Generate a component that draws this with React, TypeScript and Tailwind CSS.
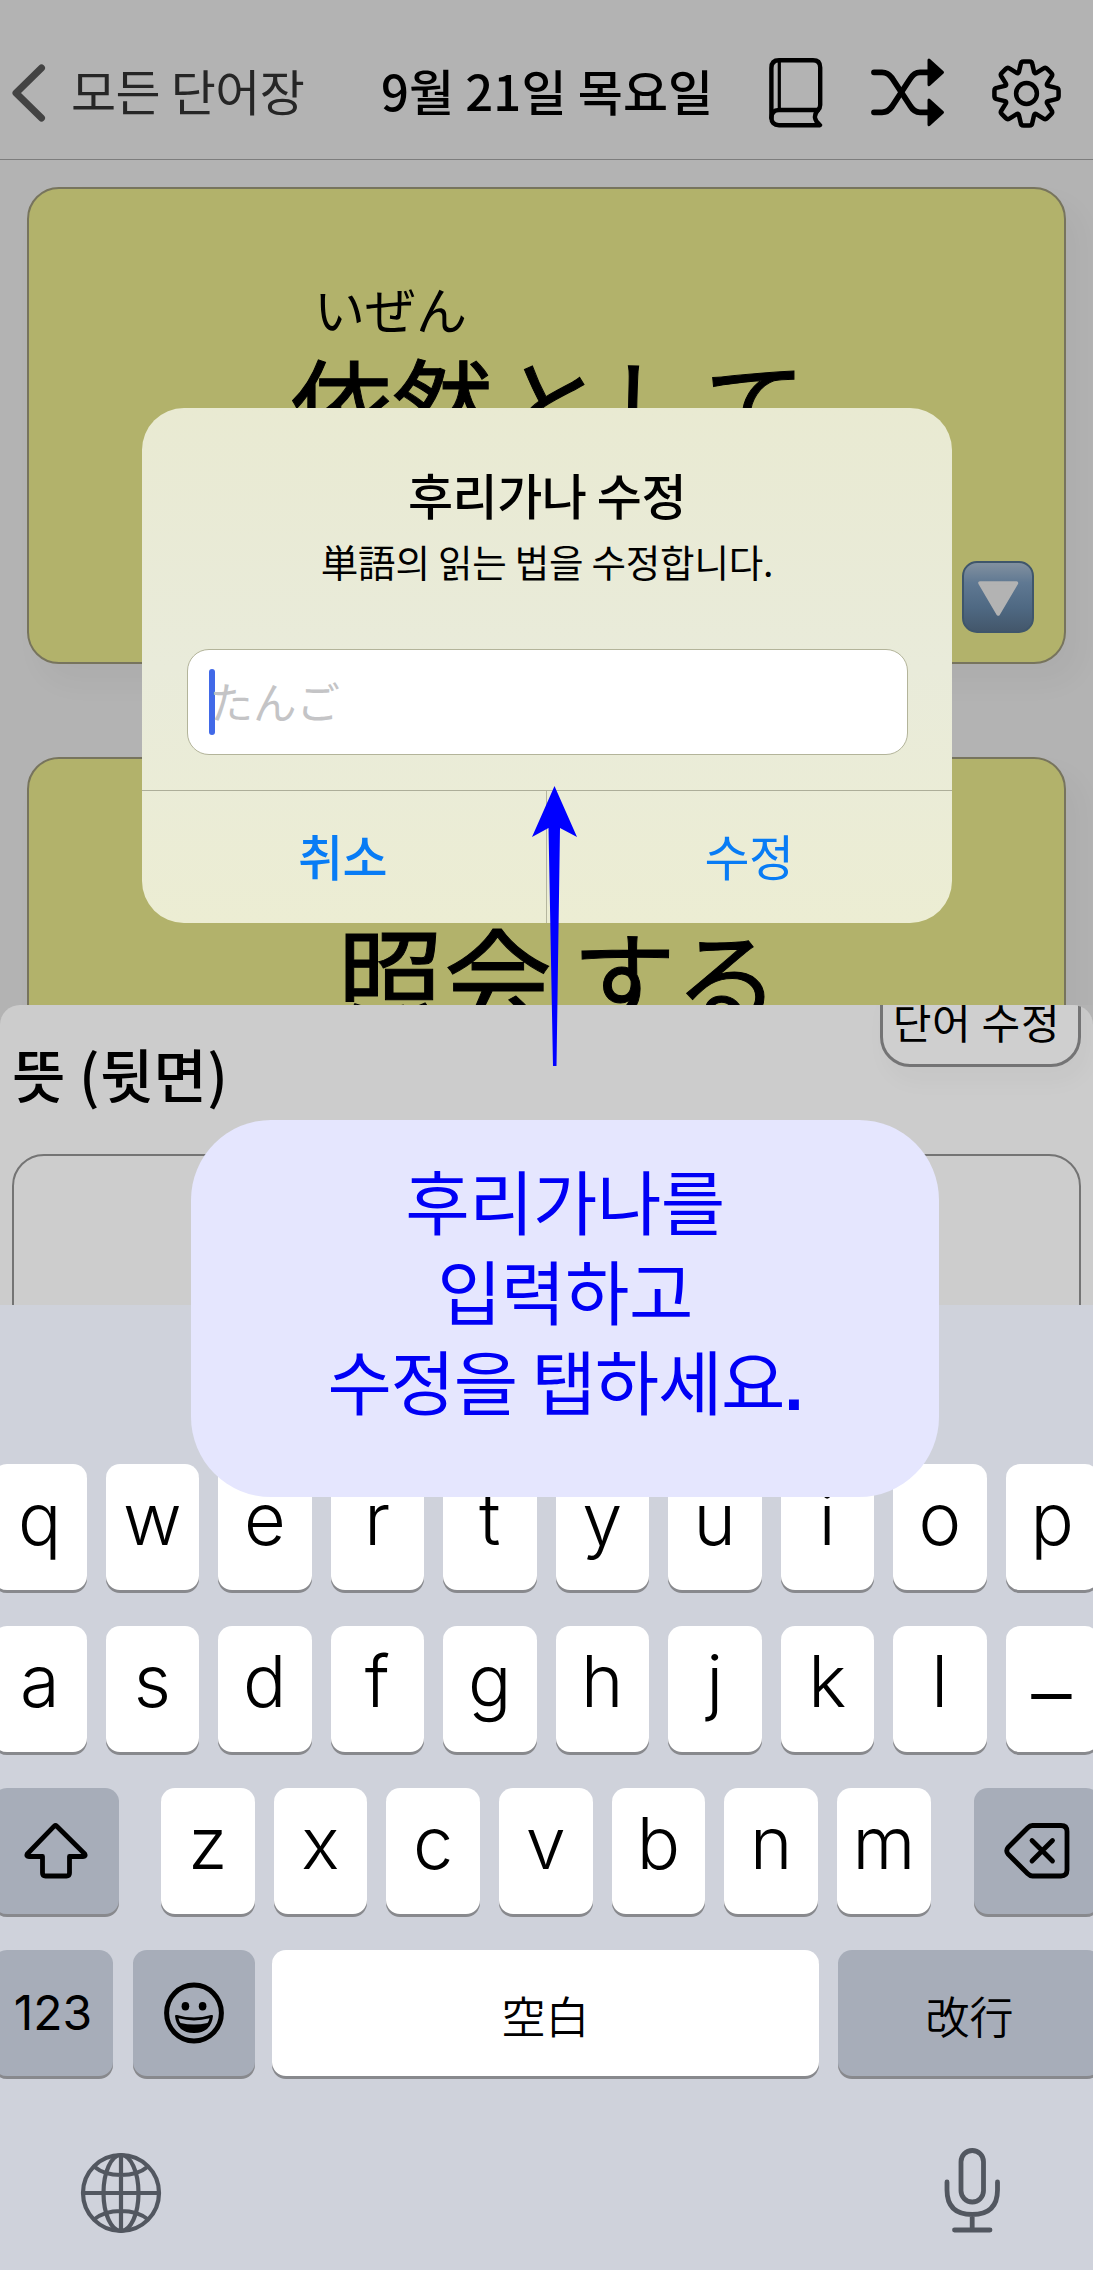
import type { ReactNode } from "react";

const KR = "font-['Noto_Sans_CJK_KR',sans-serif]";
const JP = "font-['Noto_Sans_CJK_JP',sans-serif]";

function BookIcon() {
  return (
    <svg width="54" height="70" viewBox="0 0 54 70" fill="none" stroke="#000" strokeWidth="4.4" strokeLinecap="round" strokeLinejoin="round">
      <path d="M2.4 60V10Q2.4 2.3 10 2.3H44Q51.2 2.3 51.2 9.5V47Q51.2 50 49 52" />
      <path d="M10.3 3V51" strokeWidth="3.2" />
      <path d="M2.4 60Q2.4 52 10 52H49Q42 60 51 67.2H10Q2.4 67.2 2.4 59.6" />
    </svg>
  );
}

function ShuffleIcon() {
  return (
    <svg width="74" height="70" viewBox="0 0 74 70" fill="none" stroke="#000" strokeWidth="5.8" strokeLinecap="round" strokeLinejoin="round">
      <path d="M3 14.3H11Q17 14.3 21 20L39 47.500Q43 54.300 49 54.300H58" />
      <path d="M3 54.300H11Q17 54.300 21 48.500L39 21Q43 14.300 49 14.300H58" />
      <path d="M58 2L71.500 14.300L58 26.700ZM58 42L71.500 54.300L58 66.700Z" fill="#000" strokeWidth="3" />
    </svg>
  );
}

function gearPath() {
  const at = (deg: number, r: number) => {
    const a = ((deg - 90) * Math.PI) / 180;
    return `${(34.5 + r * Math.cos(a)).toFixed(2)} ${(34.5 + r * Math.sin(a)).toFixed(2)}`;
  };
  let d = "";
  for (let i = 0; i < 8; i++) {
    const t = i * 45;
    d += `${i ? "L" : "M"}${at(t - 19.5, 22.8)}L${at(t - 11.5, 29.5)}Q${at(t - 10, 32.6)} ${at(t - 5, 32.2)}`;
    d += `L${at(t + 5, 32.2)}Q${at(t + 10, 32.6)} ${at(t + 11.5, 29.5)}L${at(t + 19.5, 22.8)}Q${at(t + 22.5, 21.5)} ${at(t + 25.5, 22.8)}`;
  }
  return d + "Z";
}

function GearIcon() {
  return (
    <svg width="69" height="69" viewBox="0 0 69 69" fill="none" stroke="#000" strokeWidth="4.500" strokeLinejoin="round">
      <path d={gearPath()} />
      <circle cx="34.500" cy="34.500" r="10.400" />
    </svg>
  );
}

function Header() {
  return (
    <header className="relative h-[160px] shrink-0 border-b border-[#7d7d7d] bg-[#b3b3b3]">
      <div className="flex h-full items-center pt-[27px]">
        <svg className="ml-[11px] shrink-0" width="36" height="60" viewBox="0 0 36 60" fill="none" stroke="#434343" strokeWidth="7" strokeLinecap="round" strokeLinejoin="round">
          <path d="M30.500 5L5 30L30.500 55" />
        </svg>
        <span className={`${KR} ml-[24px] w-[310px] whitespace-nowrap pb-[6px] text-[49px] leading-[60px] tracking-[-0.5px] text-[#262626]`}>모든 단어장</span>
        <h1 className={`${KR} w-[388px] whitespace-nowrap pb-[6px] text-[49px] font-medium leading-[60px] tracking-[0.1px] text-black`}>9월 21일 목요일</h1>
        <div className="flex items-center">
          <BookIcon />
          <div className="ml-[48px]"><ShuffleIcon /></div>
          <div className="ml-[47px]"><GearIcon /></div>
        </div>
      </div>
    </header>
  );
}

function Card({ children, className }: { children: ReactNode; className: string }) {
  return (
    <section className={`relative mx-[27px] h-[477px] shrink-0 rounded-[32px] border-2 border-[#77745d] bg-[#b2b26b] shadow-[14px_18px_30px_rgba(0,0,0,0.04)] ${className}`}>
      {children}
    </section>
  );
}

function DownButton() {
  return (
    <svg className="absolute bottom-[29px] right-[30px]" width="72" height="72" viewBox="0 0 72 72">
      <defs>
        <linearGradient id="down" x1="0" y1="0" x2="0" y2="1">
          <stop offset="0" stopColor="#8492a0" />
          <stop offset="0.3" stopColor="#5f7892" />
          <stop offset="0.65" stopColor="#4f6983" />
          <stop offset="1" stopColor="#43566a" />
        </linearGradient>
      </defs>
      <rect x="1" y="1" width="70" height="70" rx="14" fill="url(#down)" stroke="#3f566b" strokeWidth="2" />
      <path d="M18 22H54.500L36.200 53Z" fill="#b3b3b3" stroke="#b3b3b3" strokeWidth="3.500" strokeLinejoin="round" />
    </svg>
  );
}

function Dialog() {
  return (
    <div className="absolute left-[142px] top-[408px] flex h-[515px] w-[810px] flex-col overflow-hidden rounded-[42px] bg-linear-to-b from-[#e9ead2] via-[#e9ebda] to-[#ecedd3]">
      <h2 className={`${KR} mt-[56px] text-center text-[49px] font-medium leading-[60px] tracking-[-0.5px] text-black`}>후리가나 수정</h2>
      <p className={`${KR} mt-[12px] text-center text-[37.500px] leading-[50px] tracking-[-0.2px] text-black`}>
        <span className={JP}>単語</span>의 읽는 법을 수정합니다.
      </p>
      <div className="mx-auto mt-[63px] flex h-[106px] w-[721px] shrink-0 items-center rounded-[22px] border border-[#b3b49a] bg-white pl-[21px]">
        <span className="h-[66px] w-[6px] rounded-[3px] bg-[#4169e8]" />
        <span className={`${JP} -ml-[5px] pb-[3px] text-[43.500px] leading-[60px] text-[#c4c4c6]`}>たんご</span>
      </div>
      <div className="mt-[35px] grid flex-1 grid-cols-2 border-t-[1.500px] border-[#adae99] text-[#087cf5]">
        <button className={`${KR} border-r border-[#b5b69f] pb-[4px] pr-[3px] text-[49px] font-medium tracking-[-0.5px]`}>취소</button>
        <button className={`${KR} pb-[4px] pr-px text-[49px] tracking-[-0.5px]`}>수정</button>
      </div>
    </div>
  );
}

function Callout() {
  return (
    <div className={`${KR} absolute left-[191px] top-[1120px] h-[377px] w-[748px] rounded-[80px] bg-[#e5e6fe] pt-[35px] text-center text-[70px] leading-[90px] tracking-[-0.5px] text-[#0000f5]`}>
      <p>후리가나를</p>
      <p>입력하고</p>
      <p className="tracking-[-1.200px]">수정을 탭하세요<span className="font-['Liberation_Sans',sans-serif] font-bold">.</span></p>
    </div>
  );
}

function Key({ children, width, dark = false }: { children: ReactNode; width: string; dark?: boolean }) {
  return (
    <div className={`flex h-[126px] shrink-0 items-center justify-center rounded-[14px] shadow-[0_3px_0_#88898d] ${width} ${dark ? "bg-[#a7adb9]" : "bg-white"}`}>
      {children}
    </div>
  );
}

function Letter({ char }: { char: string }) {
  return (
    <Key width="w-[93.500px]">
      <span className="pb-[16px] font-[Inter,sans-serif] text-[72px] font-[350] leading-[84px] text-black">{char}</span>
    </Key>
  );
}

function Keyboard() {
  return (
    <section className="flex h-[965px] shrink-0 flex-col bg-[#cfd2db] pt-[159px]">
      <div className="-ml-[7px] flex gap-[19px]">
        {"qwertyuiop".split("").map((c) => <Letter key={c} char={c} />)}
      </div>
      <div className="-ml-[7px] mt-[36px] flex gap-[19px]">
        {"asdfghjkl".split("").map((c) => <Letter key={c} char={c} />)}
        <Key width="w-[93.500px]">
          <span className="scale-x-130 pr-px pt-[9px] font-[Inter,sans-serif] text-[62px] leading-[84px] text-black">–</span>
        </Key>
      </div>
      <div className="-ml-[7px] mt-[36px] flex">
        <Key width="w-[126px]" dark>
          <svg className="ml-[-1px]" width="64" height="56" viewBox="0 0 64 56" fill="none" stroke="#000" strokeWidth="4.800" strokeLinejoin="round">
            <path d="M30.200 3.200Q31.500 2 32.800 3.200L60.800 31Q62 33.500 59 33.500H45.500V50Q45.500 53 42.500 53H21.500Q18.500 53 18.500 50V33.500H5Q2 33.500 3.200 31Z" />
          </svg>
        </Key>
        <div className="ml-[42px] flex gap-[19.200px]">
          {"zxcvbnm".split("").map((c) => <Letter key={c} char={c} />)}
        </div>
        <div className="ml-[43px]">
          <Key width="w-[126px]" dark>
            <svg width="66" height="56" viewBox="0 0 66 56" fill="none" stroke="#000" strokeWidth="4.800" strokeLinecap="round" strokeLinejoin="round">
              <path d="M28.500 2.500H57Q63 2.500 63 8.500V47Q63 53 57 53H28.500Q26 53 23.500 50.500L4 31Q1.500 27.800 4 24.500L23.500 5Q26 2.500 28.500 2.500Z" />
              <path d="M28 17.500L48.500 38M48.500 17.500L28 38" />
            </svg>
          </Key>
        </div>
      </div>
      <div className="-ml-[7px] mt-[36px] flex">
        <Key width="w-[120px]" dark>
          <span className="pb-[1px] font-[Inter,sans-serif] text-[48px] font-[380] text-black">123</span>
        </Key>
        <div className="ml-[20px]">
          <Key width="w-[122px]" dark>
            <svg width="60" height="62" viewBox="0 0 60 62">
              <ellipse cx="30" cy="31" rx="27.400" ry="28" fill="none" stroke="#000" strokeWidth="5" />
              <ellipse cx="21.400" cy="24.300" rx="3.800" ry="4.200" />
              <ellipse cx="38.600" cy="24.300" rx="3.800" ry="4.200" />
              <path d="M11 34Q11 32.500 13 33Q30 38 47 33Q49 32.500 49 34Q47 51 30 51Q13 51 11 34Z" />
              <path d="M14.500 36.300Q30 40.500 45.500 36.300Q45 39 43.500 41Q30 44 16.500 41Q15 39 14.500 36.300Z" fill="#a7adb9" />
            </svg>
          </Key>
        </div>
        <div className="ml-[17px]">
          <Key width="w-[547px]">
            <span className={`${JP} pt-[3px] text-[44px] font-[350] leading-[60px] text-black`}>空白</span>
          </Key>
        </div>
        <div className="ml-[19px]">
          <Key width="w-[263px]" dark>
            <span className={`${JP} pt-[3px] text-[44px] font-[350] leading-[60px] text-black`}>改行</span>
          </Key>
        </div>
      </div>
      <div className="mt-[68px] flex justify-between pl-[80px] pr-[92px]">
        <svg className="mt-[8px]" width="82" height="82" viewBox="0 0 82 82" fill="none" stroke="#525760" strokeWidth="4.200">
          <circle cx="41" cy="41" r="38" />
          <ellipse cx="41" cy="41" rx="17.500" ry="38" />
          <path d="M41 3V79M3 41H79M14 14.500Q24 23 41 23T68 14.500M14 67.500Q24 59 41 59T68 67.500" />
        </svg>
        <svg className="mt-[3px]" width="60" height="88" viewBox="0 0 60 88" fill="none" stroke="#525760" strokeWidth="4.800" strokeLinecap="round">
          <rect x="20" y="3.500" width="22.500" height="51.500" rx="11.200" />
          <path d="M6 35V43Q6 67.500 31.200 67.500T56.500 43V35M31.200 68V83M13.500 83H49" />
        </svg>
      </div>
    </section>
  );
}

export default function App() {
  return (
    <div className="relative flex h-[2270px] w-[1093px] flex-col overflow-hidden bg-[#b3b3b3]">
      <Header />
      <main className="flex h-[845px] shrink-0 flex-col overflow-hidden bg-[#b3b3b3] pt-[27px]">
        <Card className="">
          <div className={`${JP} pl-[262px] pt-[84px] text-black`}>
            <p className="pl-[23px] text-[51px] leading-[70px]">いぜん</p>
            <p className="-mt-px whitespace-nowrap text-[102px] leading-[120px] tracking-[-1px] [-webkit-text-stroke:1px_#000]">依然<span className="ml-[8px] tracking-[1px]">として</span></p>
          </div>
          <DownButton />
        </Card>
        <Card className="mt-[93px]">
          <p className={`${JP} whitespace-nowrap pl-[307px] pt-[154px] text-[104px] leading-[120px] text-black [-webkit-text-stroke:1px_#000]`}><span className="text-[108px]">照会</span><span className="ml-[20px] tracking-[-1px]">する</span></p>
        </Card>
      </main>
      <div className="h-[300px] shrink-0 bg-[#b3b3b3]">
        <section className="h-full overflow-hidden rounded-t-[20px] bg-[#cccccc]">
          <div className="flex h-[149px] justify-between pl-[12px] pr-[12px]">
            <h3 className={`${KR} pt-[33px] text-[58px] font-medium leading-[70px] tracking-[0.3px] text-black`}>뜻 (뒷면)</h3>
            <button className={`${KR} -mt-[30px] h-[92px] w-[201px] rounded-[30px] border-[3px] border-[#747475] bg-[#cfcfcf] pr-[8px] pb-px text-[42px] leading-[60px] tracking-[0.7px] whitespace-nowrap text-black shadow-[6px_14px_24px_rgba(0,0,0,0.03)]`}>단어 수정</button>
          </div>
          <div className="mx-[12px] h-[200px] rounded-[32px] border-2 border-[#747474] bg-[#cdcdcd]" />
        </section>
      </div>
      <Keyboard />
      <Dialog />
      <svg className="absolute left-[531px] top-[785px]" width="47" height="282" viewBox="0 0 47 282">
        <path d="M23.500 1L46 52L29 43L25.500 281H22L17.500 43L1 52Z" fill="#0000ff" />
      </svg>
      <Callout />
    </div>
  );
}
